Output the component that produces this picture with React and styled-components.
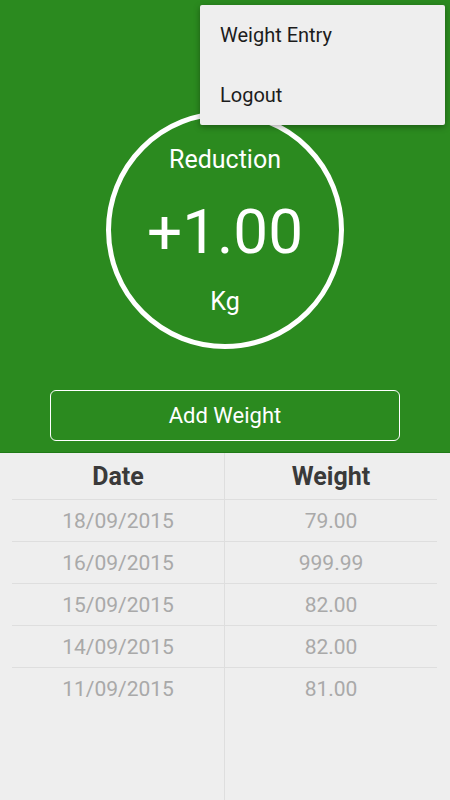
import React from "react";
import styled, { createGlobalStyle } from "styled-components";

const rows = [
	{ date: "18/09/2015", weight: "79.00" },
	{ date: "16/09/2015", weight: "999.99" },
	{ date: "15/09/2015", weight: "82.00" },
	{ date: "14/09/2015", weight: "82.00" },
	{ date: "11/09/2015", weight: "81.00" },
];

const App = () => {
	return (
		<>
			<GlobalStyle />
			<Screen>
				<Header>
					<Ring>
						<RingLabel>Reduction</RingLabel>
						<RingValue>+1.00</RingValue>
						<RingLabel>Kg</RingLabel>
					</Ring>
					<AddBtn>Add Weight</AddBtn>
				</Header>

				<Table>
					<Column $left>
						<HeadCell>Date</HeadCell>
						{rows.map((r) => (
							<Cell key={r.date}>{r.date}</Cell>
						))}
					</Column>
					<Column>
						<HeadCell>Weight</HeadCell>
						{rows.map((r) => (
							<Cell key={r.date}>{r.weight}</Cell>
						))}
					</Column>
				</Table>

				<Menu>
					<MenuItem>Weight Entry</MenuItem>
					<MenuItem>Logout</MenuItem>
				</Menu>
			</Screen>
		</>
	);
};

const GlobalStyle = createGlobalStyle`
	html, body {
		margin: 0;
		padding: 0;
		background: #eeeeee;
	}
	body {
		font-family: Roboto, "Noto Sans", sans-serif;
	}
`;

const Screen = styled.div`
	position: relative;
	width: 450px;
	height: 800px;
	display: flex;
	flex-direction: column;
	overflow: hidden;
	background: #eeeeee;
`;

const Header = styled.div`
	height: 453px;
	box-sizing: border-box;
	background-color: #2b8a1f;
	border-bottom: 1px solid #1f7a16;
	display: flex;
	flex-direction: column;
	align-items: center;
	padding-top: 111px;
`;

const Ring = styled.div`
	width: 238px;
	height: 238px;
	box-sizing: border-box;
	border: 5px solid #ffffff;
	border-radius: 50%;
	display: flex;
	flex-direction: column;
	align-items: center;
	color: #ffffff;
	padding-top: 29px;
`;

const RingLabel = styled.div`
	font-size: 25px;
	line-height: 30px;
`;

const RingValue = styled.div`
	font-size: 62px;
	line-height: 72px;
	margin: 21px 0 19px;
`;

const AddBtn = styled.button`
	margin-top: 41px;
	width: 350px;
	height: 51px;
	background: transparent;
	border: 1.5px solid #ffffff;
	border-radius: 6px;
	color: #ffffff;
	font-family: Roboto, sans-serif;
	font-size: 22px;
	padding: 0;
`;

const Table = styled.div`
	flex: 1;
	display: flex;
	padding: 0 13px 0 12px;
`;

const Column = styled.div`
	flex: 1;
	display: flex;
	flex-direction: column;
	border-right: ${(p) => (p.$left ? "1px solid #dedede" : "none")};
`;

const HeadCell = styled.div`
	height: 46px;
	border-bottom: 1px solid #dedede;
	display: flex;
	align-items: center;
	justify-content: center;
	font-size: 25px;
	font-weight: 700;
	color: #3a3a3a;
`;

const Cell = styled.div`
	height: 41px;
	border-bottom: 1px solid #dedede;
	display: flex;
	align-items: center;
	justify-content: center;
	font-size: 21px;
	color: #a9a9a9;

	&:last-child {
		border-bottom: none;
	}
`;

const Menu = styled.div`
	position: absolute;
	top: 5px;
	left: 200px;
	width: 245px;
	background: #eeeeee;
	border-radius: 2px;
	box-shadow: 0 2px 6px rgba(0, 0, 0, 0.35);
	display: flex;
	flex-direction: column;
`;

const MenuItem = styled.div`
	height: 60px;
	display: flex;
	align-items: center;
	padding-left: 20px;
	font-size: 20px;
	color: #1c1c1c;
`;

export default App;
